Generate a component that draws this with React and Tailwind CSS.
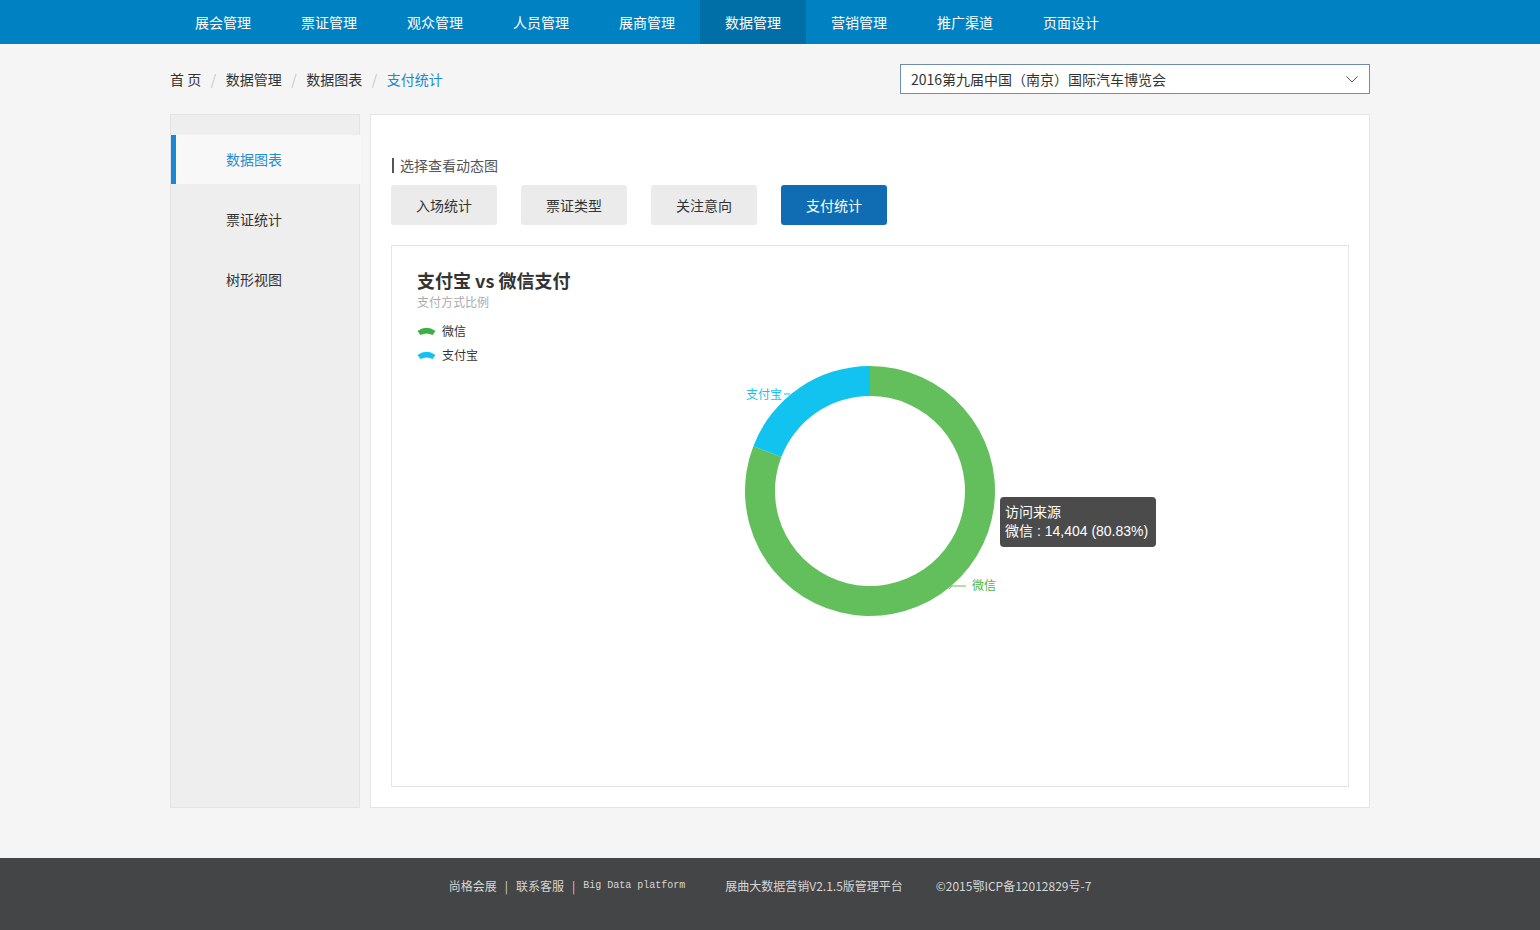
const navItems = ["展会管理", "票证管理", "观众管理", "人员管理", "展商管理", "数据管理", "营销管理", "推广渠道", "页面设计"];
const sideItems = ["数据图表", "票证统计", "树形视图"];
const tabs = ["入场统计", "票证类型", "关注意向", "支付统计"];

function LegendIcon({ color }) {
  return (
    <svg width="19" height="10" viewBox="0 0 19 10" className="mr-[6px]">
      <path d="M0.5 5 Q9.5 -1.5 18.5 5 L15.5 9 Q9.5 6 3.5 9 Z" fill={color} />
    </svg>
  );
}

function Donut() {
  return (
    <svg width="300" height="280" viewBox="0 0 300 280" className="mx-auto -mt-[14px] block">
      <path d="M150 15 A125 125 0 1 1 33.3 95.2 L61.31 105.95 A95 95 0 1 0 150 45 Z" fill="#63bf5b" />
      <path d="M33.3 95.2 A125 125 0 0 1 150 15 L150 45 A95 95 0 0 0 61.31 105.95 Z" fill="#12c3ef" />
      <polyline points="70,43 64,43" fill="none" stroke="#12c3ef" strokeWidth="1" />
      <text x="62" y="48" textAnchor="end" fontSize="12" fill="#12c3ef" fontFamily="Noto Sans CJK SC, sans-serif">支付宝</text>
      <polyline points="229,238 232,235 246,235" fill="none" stroke="#63bf5b" strokeWidth="1" />
      <text x="252" y="239" fontSize="12" fill="#4cb548" fontFamily="Noto Sans CJK SC, sans-serif">微信</text>
    </svg>
  );
}

export default function App() {
  return (
    <div className="min-h-screen bg-[#f5f5f5] font-['Noto_Sans_CJK_SC','Liberation_Sans',sans-serif] text-[#333]">
      {/* Top nav */}
      <div className="h-[44px] bg-[#0081c2]">
        <div className="w-[1200px] mx-auto flex h-full">
          {navItems.map((n) => (
            <div
              key={n}
              className={`w-[106px] h-full flex items-center justify-center text-white text-[14px] ${n === "数据管理" ? "bg-[#006fa8]" : ""}`}
            >
              {n}
            </div>
          ))}
        </div>
      </div>

      {/* Breadcrumb + select */}
      <div className="w-[1200px] mx-auto flex items-center justify-between pt-[20px]">
        <div className="flex items-center text-[14px] leading-[20px]">
          <span>首 页</span>
          <span className="text-[#c8c8c8] px-[9.5px]">/</span>
          <span>数据管理</span>
          <span className="text-[#c8c8c8] px-[9.5px]">/</span>
          <span>数据图表</span>
          <span className="text-[#c8c8c8] px-[9.5px]">/</span>
          <span className="text-[#1e88d0]">支付统计</span>
        </div>
        <div className="w-[470px] h-[30px] bg-white border border-[#6e8db0] flex items-center justify-between pl-[10px] pr-[11px] text-[14px]">
          <span>2016第九届中国（南京）国际汽车博览会</span>
          <svg width="12" height="7" viewBox="0 0 12 7">
            <polyline points="0.5,0.5 6,6 11.5,0.5" fill="none" stroke="#555" strokeWidth="1" />
          </svg>
        </div>
      </div>

      {/* Main */}
      <div className="w-[1200px] mx-auto flex gap-[10px] h-[694px] mt-[20px]">
        <div className="w-[190px] bg-[#eeeeee] border border-[#e3e3e3] pt-[20px]">
          {sideItems.map((s, i) =>
            i === 0 ? (
              <div key={s} className="h-[49px] mb-[11px] -mr-[2px] bg-[#f8f8f8] border-l-[5px] border-[#1a87d4] pl-[50px] flex items-center text-[14px] text-[#2a8ad4]">
                {s}
              </div>
            ) : (
              <div key={s} className="h-[49px] mb-[11px] pl-[55px] flex items-center text-[14px]">
                {s}
              </div>
            )
          )}
        </div>

        <div className="flex-1 bg-white border border-[#e5e5e5] px-[20px] pt-[40px] pb-[20px] flex flex-col">
          <div className="flex items-center text-[14px] leading-[20px] text-[#555]">
            <span className="w-[2px] h-[15px] bg-[#555] ml-px mr-[6px]" />
            选择查看动态图
          </div>
          <div className="flex gap-[24px] mt-[10px]">
            {tabs.map((t) => (
              <div
                key={t}
                className={`w-[106px] h-[40px] rounded-[3px] flex items-center justify-center text-[14px] ${t === "支付统计" ? "bg-[#106db3] text-white" : "bg-[#ebebeb] text-[#333]"}`}
              >
                {t}
              </div>
            ))}
          </div>

          <div className="mt-[20px] flex-1 border border-[#e5e5e5] relative px-[25px] pt-[22px]">
            <div className="text-[18px] font-bold leading-[24px] text-[#333]">支付宝 vs 微信支付</div>
            <div className="text-[12px] leading-[16px] text-[#aaa] mt-[2px]">支付方式比例</div>
            <div className="mt-[11px] flex flex-col gap-[4px] text-[12px] text-[#333]">
              <div className="flex items-center h-[20px]">
                <LegendIcon color="#3cb043" />
                微信
              </div>
              <div className="flex items-center h-[20px]">
                <LegendIcon color="#12c3ef" />
                支付宝
              </div>
            </div>
            <Donut />
            <div className="absolute left-[608px] top-[251px] w-[156px] h-[50px] rounded-[4px] bg-[#4b4b4b] px-[5px] py-[6px] text-white text-[14px] leading-[19px] font-['Liberation_Sans','Noto_Sans_CJK_SC',sans-serif]">
              <div>访问来源</div>
              <div>微信 : 14,404 (80.83%)</div>
            </div>
          </div>
        </div>
      </div>

      {/* Footer */}
      <div className="mt-[50px] h-[72px] bg-[#434547] pt-[20px] flex justify-center text-[12px] leading-[16px] text-[#d6d6d6]">
        <span>尚格会展</span>
        <span className="px-[8px]">|</span>
        <span>联系客服</span>
        <span className="px-[8px]">|</span>
        <span className="font-['Liberation_Mono',monospace] text-[10px]">Big Data platform</span>
        <span className="ml-[40px]">展曲大数据营销V2.1.5版管理平台</span>
        <span className="ml-[33px]">©2015鄂ICP备12012829号-7</span>
      </div>
    </div>
  );
}
